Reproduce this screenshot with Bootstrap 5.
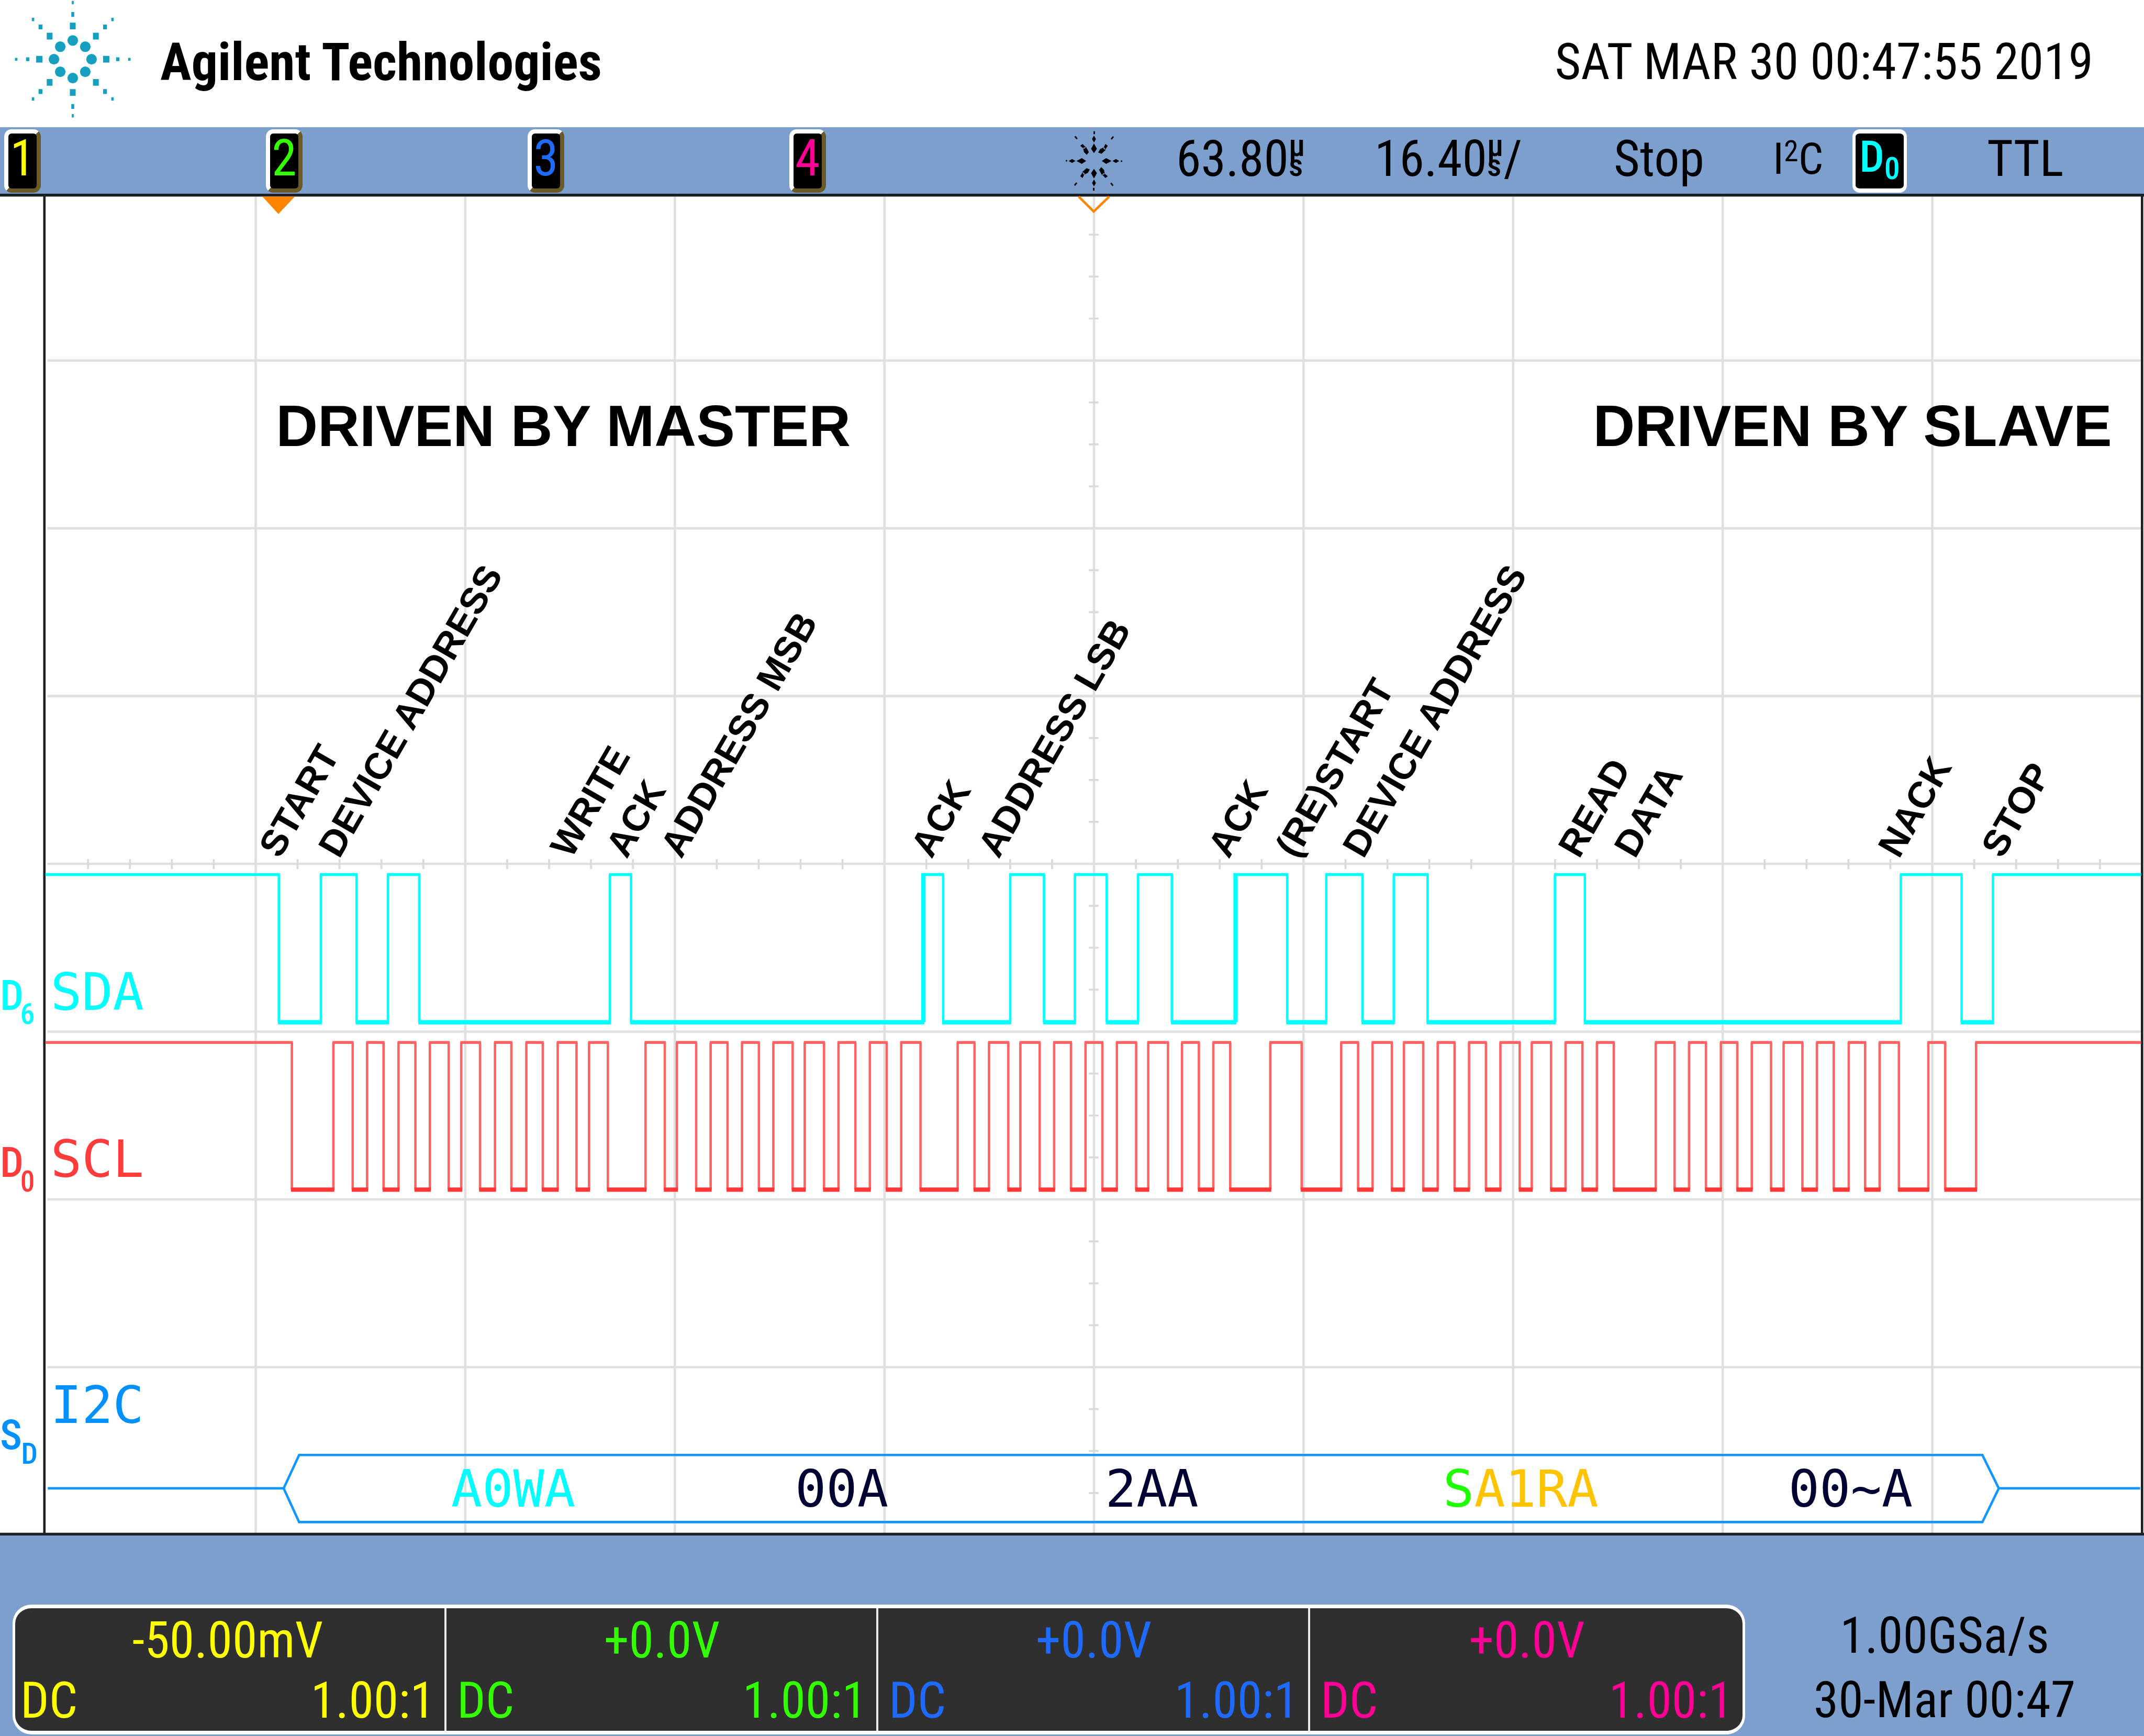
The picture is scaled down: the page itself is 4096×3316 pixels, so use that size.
<!DOCTYPE html>
<html lang="en">
<head>
<meta charset="utf-8">
<meta name="viewport" content="width=device-width, initial-scale=1">
<title>Agilent Technologies - I2C capture</title>
<link href="https://cdn.jsdelivr.net/npm/bootstrap@5.3.0/dist/css/bootstrap.min.css" rel="stylesheet">
<style>
  body { font-family: "Roboto Condensed", Roboto, "Liberation Sans", sans-serif; font-size: 96px; line-height: 115px; color: #000; background: #fff; }
  .brand-logo { width: 230px; fill: #179fbf; }
  .brand-name { font-size: 100px; }
  .brand-name, .clock { padding-bottom: 6px; }
  .top-line { gap: 52px; padding: 0 97px 0 24px; }
  .panel-blue { background: #7d9fce; }
  .status-grid { display: grid; grid-template-columns: 500fr 500fr 500fr 528fr 211fr 379fr 457fr 304fr 152fr 257fr 300fr; padding: 4px 0 2px 8px; white-space: nowrap; }
  .status-grid > * { min-width: 0; height: 121px; line-height: 113px; }
  .chan-key { width: 70px; height: 121px; line-height: 95px; background: #000; border: 8px solid; border-color: #fff #6b5a28 #6b5a28 #fff; border-radius: 14px; padding: 0; font-size: 96px; display: flex; justify-content: center; }
  .digital-key { width: 104px; height: 121px; line-height: 84px; background: #000; border: 8px solid #fff; border-width: 8px 6px; border-radius: 14px; padding: 0 0 14px 0; color: #0ff; font-size: 84px; font-weight: 500; display: flex; align-items: center; justify-content: center; }
  .digital-key .bit { font-size: 60px; padding-top: 44px; }
  .trig-star { width: 108px; }
  .unit { font-size: 60px; font-weight: 500; line-height: 38px; vertical-align: 38px; }
  .proto { font-size: 84px; }
  .proto small { font-size: 56px; vertical-align: 24px; line-height: 0; }
  .c1 { color: #ff0; } .c2 { color: #3f0; } .c3 { color: #1f6bff; } .c4 { color: #ff0096; }
  .scope { width: 100%; }
  .note { font: bold 77px "Liberation Sans", Arial, sans-serif; }
  .heading-note { font: bold 120px "Liberation Sans", Arial, sans-serif; }
  .mono { font-family: "DejaVu Sans Mono", monospace; font-size: 107px; }
  .chan-big { font-size: 86px; font-weight: 500; } .chan-sub { font-size: 60px; font-weight: 500; }
  .foot { padding: 132px 0 3px 24px; white-space: nowrap; }
  .chan-panel { display: grid; grid-template-columns: 820fr 825fr 825fr 830fr; flex: 0 0 3310px; background: #2f2f2f; border: 7px solid #fff; border-width: 7px 5px; border-radius: 36px; }
  .chan-cell { padding: 4px 18px 0 10px; }
  .chan-cell + .chan-cell { border-left: 4px solid #e8e8e8; padding-left: 20px; }
</style>
<script src="https://cdn.jsdelivr.net/npm/bootstrap@5.3.0/dist/js/bootstrap.bundle.min.js"></script>
</head>
<body>
<header class="top-line d-flex align-items-center">
  <svg class="brand-logo flex-shrink-0" viewBox="0 0 250 264" aria-hidden="true">
    <g transform="translate(125 123)">
      <g><circle cx="0" cy="-39" r="11"/><circle cx="26" cy="-26" r="11"/><circle cx="39" cy="0" r="11"/><circle cx="26" cy="26" r="11"/><circle cx="0" cy="39" r="11"/><circle cx="-26" cy="26" r="11"/><circle cx="-39" cy="0" r="11"/><circle cx="-26" cy="-26" r="11"/></g>
      <path d="M-6-76h12v14h-12zM-6 62h12v14h-12zM-76-7h13v14h-13zM63-7h13v14h-13zM-54-55h12v14h-12zM42-55h12v14h-12zM-54 41h12v14h-12zM42 41h12v14h-12z"/>
      <path d="M-3-98h6v10h-6zM-3 93h6v10h-6zM-97-4h7v8h-7zM90-4h7v8h-7zM-71-72h8v10h-8zM63-72h8v10h-8zM-71 62h8v10h-8zM63 62h8v10h-8z"/>
      <path d="M-2-121h4v7h-4zM-2 114h4v7h-4zM-120-3h5v6h-5zM115-3h5v6h-5zM-85-86h5v7h-5zM80-86h5v7h-5zM-85 79h5v7h-5zM80 79h5v7h-5z"/>
    </g>
  </svg>
  <b class="brand-name">Agilent Technologies</b>
  <time class="clock ms-auto">SAT MAR 30 00:47:55 2019</time>
</header>

<nav class="panel-blue status-grid">
  <div><button class="chan-key c1">1</button></div>
  <div><button class="chan-key c2">2</button></div>
  <div><button class="chan-key c3">3</button></div>
  <div><button class="chan-key c4">4</button></div>
  <svg class="trig-star" viewBox="-58 -65 116 130" aria-hidden="true">
    <defs><path id="ray" d="M0-16L6-25L0-36L-6-25ZM0-38L4-45L0-52L-4-45ZM-1-61h3v6h-3z"/><path id="dray" d="M-4-19L3-21L5-33L-1-35L-5-27ZM-3-42h6l1 10h-5zM-1-64h3v7h-3z"/></defs>
    <use href="#ray"/><use href="#ray" transform="rotate(90)"/><use href="#ray" transform="rotate(180)"/><use href="#ray" transform="rotate(270)"/>
    <use href="#dray" transform="rotate(38)"/><use href="#dray" transform="rotate(142)"/><use href="#dray" transform="rotate(218)"/><use href="#dray" transform="rotate(322)"/>
  </svg>
  <div>63.80<span class="unit d-inline-flex flex-column"><span>µ</span><span>s</span></span></div>
  <div>16.40<span class="unit d-inline-flex flex-column"><span>µ</span><span>s</span></span>/</div>
  <div>Stop</div>
  <div class="proto">I<small>2</small>C</div>
  <div><button class="digital-key">D<span class="bit">0</span></button></div>
  <div>TTL</div>
</nav>

<main>
<svg class="scope d-block" viewBox="0 401 4444 2781" role="img" aria-label="I2C waveform">
  <path id="grid" stroke="#e0e0e0" stroke-width="5" fill="none"/>
  <path id="ticks" stroke="#dadada" stroke-width="4" fill="none"/>
  <path d="M0 404H4444M0 3179H4444" stroke="#1c1f24" stroke-width="6"/>
  <path d="M92 404V3180M4440 404V3180" stroke="#1c1f24" stroke-width="5"/>
  <path d="M544 407H611L577 443Z" fill="#ff8400"/>
  <path d="M2236 407L2267 438L2299 407" fill="none" stroke="#ff8400" stroke-width="5"/>

  <g id="waves" fill="none"></g>

  <g fill="none" stroke="#1496ff" stroke-width="5">
    <path d="M99 3084H588M4143 3084H4436M620 3015H4109L4143 3084L4109 3154H620L588 3084Z"/>
  </g>

  <g fill="#0ff"><text class="chan-big" x="0" y="2092">D</text><text class="chan-sub" x="42" y="2122">6</text><text class="mono" x="105" y="2092">SDA</text></g>
  <g fill="#ff3c3c"><text class="chan-big" x="0" y="2439">D</text><text class="chan-sub" x="42" y="2469">0</text><text class="mono" x="105" y="2439">SCL</text></g>
  <g fill="#0090ff"><text class="chan-big" x="0" y="3003">S</text><text class="chan-sub" x="44" y="3033">D</text><text class="mono" x="105" y="2948">I2C</text></g>

  <g class="mono" fill="#003">
    <text x="935" y="3122" fill="#0ff">A0WA</text>
    <text x="1648" y="3122">00A</text>
    <text x="2291" y="3122">2AA</text>
    <text x="2991" y="3122" fill="#ffc400"><tspan fill="#20ff00">S</tspan>A1RA</text>
    <text x="3707" y="3122">00~A</text>
  </g>

  <g class="heading-note"><text x="572" y="924">DRIVEN BY MASTER</text><text x="3302" y="924">DRIVEN BY SLAVE</text></g>
  <g class="note">
    <text transform="translate(580 1781) rotate(-60)">START</text>
    <text transform="translate(703 1781) rotate(-60)">DEVICE ADDRESS</text>
    <text transform="translate(1184 1781) rotate(-60)">WRITE</text>
    <text transform="translate(1299 1781) rotate(-60)">ACK</text>
    <text transform="translate(1412 1781) rotate(-60)">ADDRESS MSB</text>
    <text transform="translate(1931 1781) rotate(-60)">ACK</text>
    <text transform="translate(2070 1781) rotate(-60)">ADDRESS LSB</text>
    <text transform="translate(2547 1781) rotate(-60)">ACK</text>
    <text transform="translate(2687 1781) rotate(-60)">(RE)START</text>
    <text transform="translate(2826 1781) rotate(-60)">DEVICE ADDRESS</text>
    <text transform="translate(3273 1781) rotate(-60)">READ</text>
    <text transform="translate(3389 1781) rotate(-60)">DATA</text>
    <text transform="translate(3936 1781) rotate(-60)">NACK</text>
    <text transform="translate(4150 1781) rotate(-60)">STOP</text>
  </g>
</svg>
</main>

<footer class="panel-blue foot d-flex align-items-end">
  <div class="chan-panel">
    <div class="chan-cell c1"><div class="text-center">-50.00mV</div><div class="d-flex justify-content-between"><span>DC</span><span>1.00:1</span></div></div>
    <div class="chan-cell c2"><div class="text-center">+0.0V</div><div class="d-flex justify-content-between"><span>DC</span><span>1.00:1</span></div></div>
    <div class="chan-cell c3"><div class="text-center">+0.0V</div><div class="d-flex justify-content-between"><span>DC</span><span>1.00:1</span></div></div>
    <div class="chan-cell c4"><div class="text-center">+0.0V</div><div class="d-flex justify-content-between"><span>DC</span><span>1.00:1</span></div></div>
  </div>
  <div class="flex-fill d-flex flex-column text-center gap-2 pb-2"><span>1.00GSa/s</span><span>30-Mar 00:47</span></div>
</footer>

<script>
  // Graticule: 10 x 8 divisions, minor ticks on both centre axes (5 per column, 4 per row)
  let grid = '', ticks = '';
  for (let i = 1; i < 10; i++) grid += `M${95.6 + 434.4 * i} 407V3177`;
  for (let j = 1; j < 8; j++) grid += `M98 ${399 + 347.7 * j}H4438`;
  for (let i = 1; i < 50; i++) if (i % 5) ticks += `M${95.6 + 86.88 * i} 1780v21`;
  for (let j = 1; j < 32; j++) if (j % 4) ticks += `M2257 ${399 + 86.925 * j}h20`;
  document.getElementById('grid').setAttribute('d', grid);
  document.getElementById('ticks').setAttribute('d', ticks);

  // Digital channels start high; every entry toggles the level
  const channels = [
    { high: 1812, low: 2118, side: '#00ffff', top: '#00ffff', base: '#00ffff', wide: [1914, 2561],
      edges: [578,665,739,804,869,1264,1308,1914,1955,2094,2164,2228,2294,2359,2429,2561,2668,2749,2824,2889,2959,3223,3285,3940,4066,4131] },
    { high: 2160, low: 2465, side: '#ff6464', top: '#ff6464', base: '#ff3838', wide: [],
      edges: [605,691,731,761,795,826,861,891,930,956,995,1026,1060,1091,1125,1156,1195,1221,1260,1338,1378,1403,1443,1473,
        1508,1538,1573,1603,1643,1668,1708,1738,1773,1803,1838,1868,1908,1985,2020,2050,2090,2115,2155,2185,2220,2250,2285,2315,2355,2380,
        2421,2450,2485,2515,2550,2633,2698,2780,2815,2845,2885,2910,2950,2980,3015,3045,3080,3110,3150,3175,3215,3245,3280,3310,3345,3432,
        3471,3501,3536,3567,3601,3631,3671,3697,3736,3766,3801,3832,3866,3896,3936,3997,4032,4096] }
  ];
  const line = (d, c, w) => `<path d="${d}" stroke="${c}" stroke-width="${w}"/>`;
  document.getElementById('waves').innerHTML = channels.map(ch => {
    let top = '', base = '', side = '', x = 96;
    [...ch.edges, 4436].forEach((e, i) => {
      if (i % 2) base += `M${x - 2} ${ch.low}H${e + 2}`; else top += `M${x - 2} ${ch.high}H${e + 2}`;
      if (e < 4436) side += `M${e} ${ch.high}V${ch.low}`;
      x = e;
    });
    const wide = ch.wide.map(e => `M${e} ${ch.high - 3}V${ch.low}`).join('');
    return line(side, ch.side, 5) + line(top, ch.top, 6) + line(base, ch.base, 9) + line(wide, ch.side, 9);
  }).join('');
</script>
</body>
</html>
